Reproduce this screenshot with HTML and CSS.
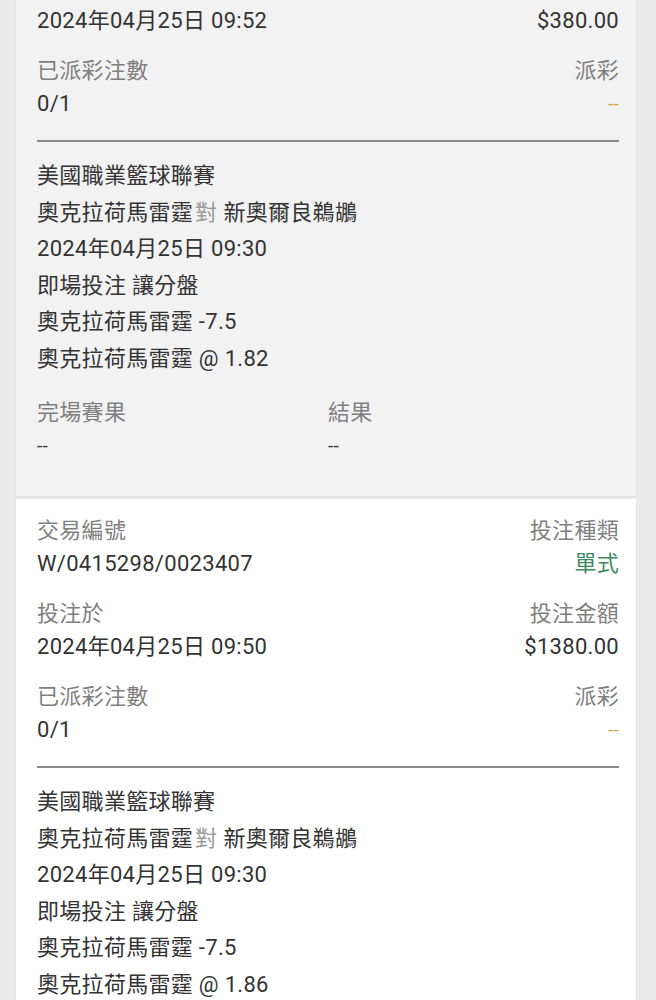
FILE: index.html
```html
<!DOCTYPE html>
<html lang="zh-Hant">
<head>
<meta charset="utf-8">
<title>投注紀錄</title>
<link rel="stylesheet" href="styles.css">
</head>
<body>
<div class="list">
  <section class="card card-past">
    <div class="info">
      <div class="row">
        <div class="cell">
          <div class="label">投注於</div>
          <div class="value">2024年04月25日 09:52</div>
        </div>
        <div class="cell right">
          <div class="label">投注金額</div>
          <div class="value">$380.00</div>
        </div>
      </div>
      <div class="row">
        <div class="cell">
          <div class="label">已派彩注數</div>
          <div class="value">0/1</div>
        </div>
        <div class="cell right">
          <div class="label">派彩</div>
          <div class="value payout">--</div>
        </div>
      </div>
    </div>
    <hr class="divider">
    <div class="match">
      <div class="line">美國職業籃球聯賽</div>
      <div class="line">奧克拉荷馬雷霆<span class="vs">對</span>新奧爾良鵜鶘</div>
      <div class="line">2024年04月25日 09:30</div>
      <div class="line">即場投注 讓分盤</div>
      <div class="line">奧克拉荷馬雷霆 -7.5</div>
      <div class="line">奧克拉荷馬雷霆 @ 1.82</div>
    </div>
    <div class="result">
      <div class="cell">
        <div class="label">完場賽果</div>
        <div class="value dash">--</div>
      </div>
      <div class="cell">
        <div class="label">結果</div>
        <div class="value dash">--</div>
      </div>
    </div>
  </section>

  <section class="card">
    <div class="info">
      <div class="row">
        <div class="cell">
          <div class="label">交易編號</div>
          <div class="value">W/0415298/0023407</div>
        </div>
        <div class="cell right">
          <div class="label">投注種類</div>
          <div class="value type">單式</div>
        </div>
      </div>
      <div class="row">
        <div class="cell">
          <div class="label">投注於</div>
          <div class="value">2024年04月25日 09:50</div>
        </div>
        <div class="cell right">
          <div class="label">投注金額</div>
          <div class="value">$1380.00</div>
        </div>
      </div>
      <div class="row">
        <div class="cell">
          <div class="label">已派彩注數</div>
          <div class="value">0/1</div>
        </div>
        <div class="cell right">
          <div class="label">派彩</div>
          <div class="value payout">--</div>
        </div>
      </div>
    </div>
    <hr class="divider">
    <div class="match">
      <div class="line">美國職業籃球聯賽</div>
      <div class="line">奧克拉荷馬雷霆<span class="vs">對</span>新奧爾良鵜鶘</div>
      <div class="line">2024年04月25日 09:30</div>
      <div class="line">即場投注 讓分盤</div>
      <div class="line">奧克拉荷馬雷霆 -7.5</div>
      <div class="line">奧克拉荷馬雷霆 @ 1.86</div>
    </div>
    <div class="result">
      <div class="cell">
        <div class="label">完場賽果</div>
        <div class="value dash">--</div>
      </div>
      <div class="cell">
        <div class="label">結果</div>
        <div class="value dash">--</div>
      </div>
    </div>
  </section>
</div>
</body>
</html>
```

FILE: styles.css
```css
html, body {
  margin: 0;
  padding: 0;
  background: #ebebeb;
}

body {
  font-family: Roboto, "Noto Sans CJK TC", sans-serif;
  font-size: 22px;
  letter-spacing: 0.3px;
  color: #333333;
  overflow: hidden;
}

.list {
  display: flex;
  flex-direction: column;
  gap: 3px;
  margin: -44px 20px 0 16px;
}

.card {
  background: #ffffff;
  padding: 15px 17px 34px 21px;
  box-shadow: 0 1px 2px rgba(0, 0, 0, 0.08);
  display: flex;
  flex-direction: column;
}

.card-past {
  background: #f2f2f2;
}

.info {
  display: flex;
  flex-direction: column;
  gap: 17px;
}

.row {
  display: flex;
  justify-content: space-between;
}

.cell {
  display: flex;
  flex-direction: column;
}

.cell.right {
  align-items: flex-end;
}

.label {
  line-height: 33px;
  color: #7f7f7f;
}

.value {
  line-height: 33px;
  color: #333333;
}

.dash {
  font-size: 19px;
}

.payout {
  color: #d0a93f;
  font-size: 19px;
}

.type {
  color: #3d8a5f;
}

.divider {
  border: 0;
  height: 2px;
  background: #8a8a8a;
  margin: 20px 0 16px;
}

.match .line {
  line-height: 36.5px;
  white-space: nowrap;
}

.vs {
  color: #9a9a9a;
  margin: 0 6px 0 2px;
}

.result {
  display: grid;
  grid-template-columns: 1fr 1fr;
  margin-top: 19px;
}
```
